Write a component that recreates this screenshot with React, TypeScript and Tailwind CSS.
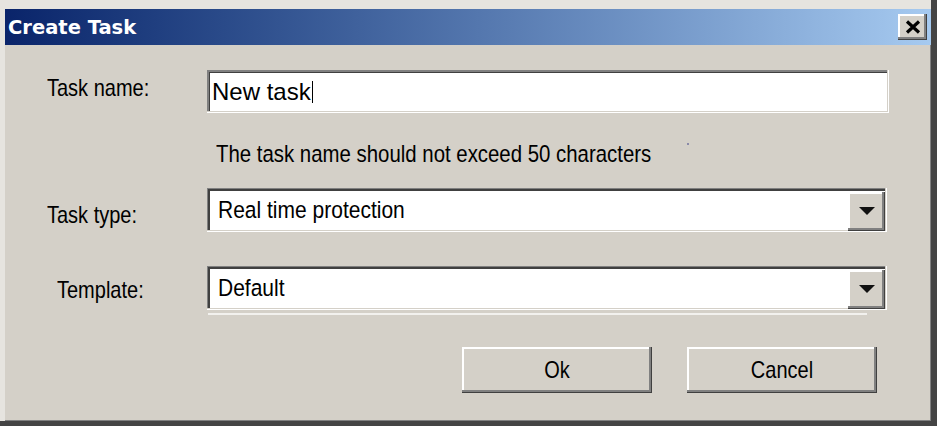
import React from "react";

const sunken =
  "shadow-[inset_-1px_-1px_0_#ffffff,inset_-2px_-2px_0_#d4d0c8,inset_2px_2px_0_#808080,inset_3px_3px_0_#404040]";
const sunkenDark =
  "shadow-[inset_-1px_-1px_0_#ffffff,inset_-2px_-2px_0_#d4d0c8,inset_1px_1px_0_#808080,inset_3px_3px_0_#404040]";
const raised =
  "shadow-[inset_-1px_-1px_0_#404040,inset_-3px_-3px_0_#808080,inset_2px_2px_0_#ffffff]";

function Arrow() {
  return (
    <svg width="18" height="10" viewBox="0 0 18 10">
      <polygon points="1,1 17,1 9,9" fill="#111111" />
    </svg>
  );
}

function Combo({ value }: { value: string }) {
  return (
    <div className={`flex-1 mr-[2px] h-[44px] bg-white flex items-center ${sunkenDark}`}>
      <span className="flex-1 pl-[11px] text-[21px] leading-[24px] text-black inline-block scale-y-[1.14] origin-center">
        {value}
      </span>
      <div className={`w-[37px] h-[39px] mr-[2px] mt-[2px] bg-[#d4d0c8] flex items-center justify-center ${raised}`}>
        <Arrow />
      </div>
    </div>
  );
}

export default function App() {
  return (
    <div
      className="w-[937px] h-[426px] bg-[#e6e4df] border-r-[6px] border-b-[5px] border-[#444444] pl-[5px] pt-[9px] flex flex-col"
      style={{ fontFamily: '"Liberation Sans", Arial, sans-serif' }}
    >
      {/* Title bar */}
      <div className="h-[36px] shrink-0 flex items-center justify-between bg-gradient-to-r from-[#0a246a] to-[#a6caf0] pl-[3px] pr-[4px]">
        <span
          className="text-white font-bold text-[19.5px] leading-none mt-[2px]"
          style={{ fontFamily: '"DejaVu Sans", Verdana, sans-serif' }}
        >
          Create Task
        </span>
        <div className={`w-[29px] h-[26px] bg-[#d4d0c8] flex items-center justify-center ${raised}`}>
          <svg width="16" height="14" viewBox="0 0 16 14" className="mb-[1px]">
            <path d="M2 1.5 L14 12.5 M14 1.5 L2 12.5" stroke="#000" strokeWidth="3.2" />
          </svg>
        </div>
      </div>

      {/* Body */}
      <div className="flex-1 bg-[#d4d0c8] shadow-[inset_-1px_-1px_0_#808080] pl-[42px] pr-[42px] flex flex-col text-black">
        {/* Task name */}
        <div className="flex items-start mt-[25px]">
          <div className="w-[160px] mt-[6px] h-[24px] text-[20px] leading-[24px]">
            <span className="inline-block scale-y-[1.18]">Task name:</span>
          </div>
          <div className={`flex-1 h-[43px] bg-white flex items-center pl-[5px] ${sunken}`}>
            <span className="text-[24px] leading-[28px] text-black">New task</span>
            <span className="w-[1.5px] h-[22px] bg-black ml-[1px]" />
          </div>
        </div>

        {/* Hint */}
        <div className="flex items-start mt-[29px] ml-[169px] h-[24px]">
          <span className="inline-block text-[20.4px] leading-[24px] scale-y-[1.16] origin-center">
            The task name should not exceed 50 characters
          </span>
          <span className="w-[2px] h-[2px] bg-[#8a8aa8] ml-[36px] mt-[1px]" />
        </div>

        {/* Task type */}
        <div className="flex items-start mt-[22px]">
          <div className="w-[160px] mt-[15px] h-[24px] text-[20px] leading-[24px]">
            <span className="inline-block scale-y-[1.18]">Task type:</span>
          </div>
          <Combo value="Real time protection" />
        </div>

        {/* Template */}
        <div className="flex items-start mt-[34px]">
          <div className="w-[160px] mt-[12px] pl-[10px] h-[24px] text-[20px] leading-[24px]">
            <span className="inline-block scale-y-[1.18]">Template:</span>
          </div>
          <div className="flex-1 flex flex-col">
            <div className="flex">
              <Combo value="Default" />
            </div>
            <div className="h-[2px] mt-[3px] mr-[22px] ml-[1px] bg-[#f2f1ee]" />
          </div>
        </div>

        {/* Buttons */}
        <div className="flex justify-end gap-[35px] mt-[32px] pr-[12px]">
          <div className={`w-[190px] h-[46px] bg-[#d4d0c8] flex items-center justify-center ${raised}`}>
            <span className="inline-block text-[20px] leading-[24px] scale-y-[1.18]">Ok</span>
          </div>
          <div className={`w-[190px] h-[46px] bg-[#d4d0c8] flex items-center justify-center ${raised}`}>
            <span className="inline-block text-[20px] leading-[24px] scale-y-[1.18]">Cancel</span>
          </div>
        </div>
      </div>
    </div>
  );
}
